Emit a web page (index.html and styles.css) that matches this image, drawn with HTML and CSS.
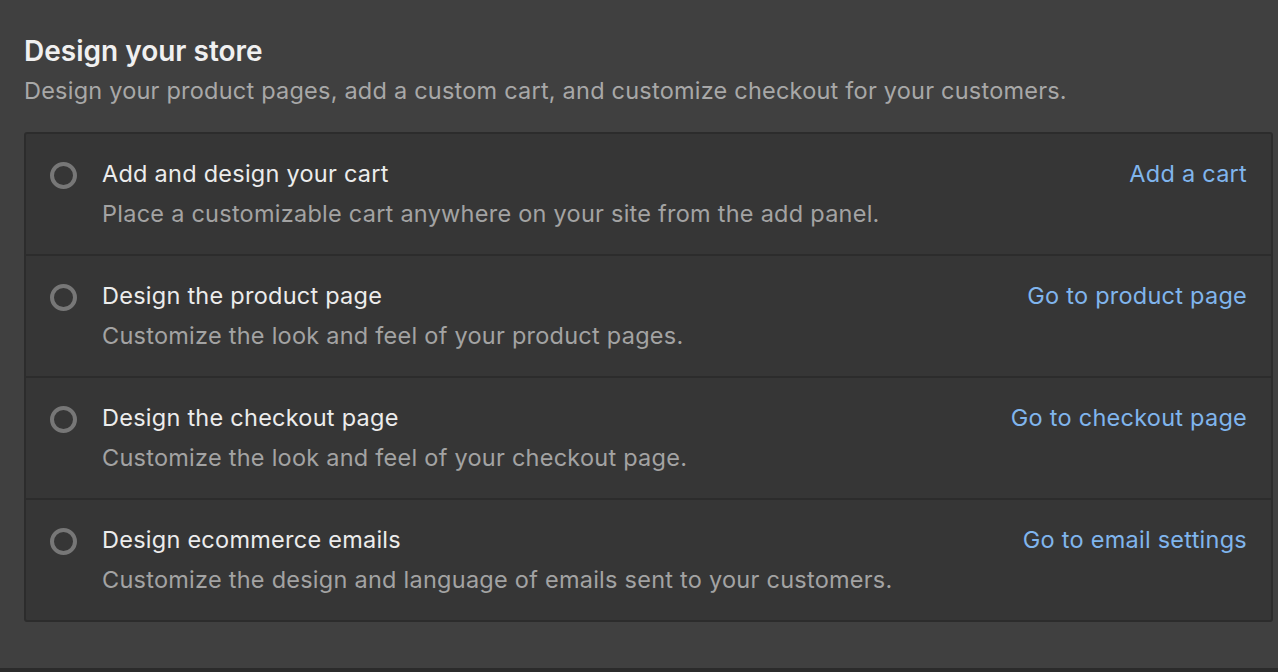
FILE: index.html
```html
<!DOCTYPE html>
<html lang="en">
<head>
    <meta charset="UTF-8">
    <title>Design your store</title>
    <link rel="stylesheet" href="styles.css">
</head>
<body>
    <div class="section">
        <h2 class="section-title">Design your store</h2>
        <p class="section-sub">Design your product pages, add a custom cart, and customize checkout for your customers.</p>

        <div class="task-list">
            <div class="task">
                <span class="check"></span>
                <div class="task-text">
                    <div class="task-title">Add and design your cart</div>
                    <div class="task-desc">Place a customizable cart anywhere on your site from the add panel.</div>
                </div>
                <a class="task-link" href="#">Add a cart</a>
            </div>
            <div class="task">
                <span class="check"></span>
                <div class="task-text">
                    <div class="task-title">Design the product page</div>
                    <div class="task-desc">Customize the look and feel of your product pages.</div>
                </div>
                <a class="task-link" href="#">Go to product page</a>
            </div>
            <div class="task">
                <span class="check"></span>
                <div class="task-text">
                    <div class="task-title">Design the checkout page</div>
                    <div class="task-desc">Customize the look and feel of your checkout page.</div>
                </div>
                <a class="task-link" href="#">Go to checkout page</a>
            </div>
            <div class="task">
                <span class="check"></span>
                <div class="task-text">
                    <div class="task-title">Design ecommerce emails</div>
                    <div class="task-desc">Customize the design and language of emails sent to your customers.</div>
                </div>
                <a class="task-link" href="#">Go to email settings</a>
            </div>
        </div>
    </div>
</body>
</html>
```

FILE: styles.css
```css
body {
    margin: 0;
    padding: 0;
    background-color: #2b2b2b;
    font-family: Inter, "Noto Sans", sans-serif;
}
.section {
    background-color: #404040;
    height: 668px;
    padding: 33px 5px 0 24px;
    box-sizing: border-box;
}
.section-title {
    margin: 0;
    font-size: 28px;
    font-weight: 600;
    line-height: 36px;
    color: #f0f0f0;
}
.section-sub {
    margin: 6px 0 0 0;
    font-size: 23.5px;
    line-height: 32px;
    color: #a8a8a8;
    letter-spacing: 0.22px;
}
.task-list {
    margin-top: 25px;
    background-color: #363636;
    border: 2px solid #2c2c2c;
    border-radius: 3px;
}
.task {
    display: flex;
    align-items: flex-start;
    height: 122px;
    box-sizing: border-box;
    padding: 24px 24px 0 24px;
    border-top: 2px solid #2c2c2c;
}
.task:first-child {
    border-top: none;
    height: 120px;
}
.check {
    width: 19px;
    height: 19px;
    border: 4px solid #777777;
    border-radius: 50%;
    margin: 4px 0 0 0;
    flex-shrink: 0;
}
.task-text {
    flex: 1;
    margin-left: 25px;
}
.task-title {
    font-size: 23.5px;
    line-height: 32px;
    color: #ececec;
    letter-spacing: 0.25px;
}
.task-desc {
    margin-top: 8px;
    font-size: 23.5px;
    line-height: 32px;
    color: #a3a3a3;
    letter-spacing: 0.25px;
}
.task-link {
    font-size: 23.5px;
    line-height: 32px;
    color: #80b5ed;
    text-decoration: none;
    letter-spacing: 0.25px;
}
```
